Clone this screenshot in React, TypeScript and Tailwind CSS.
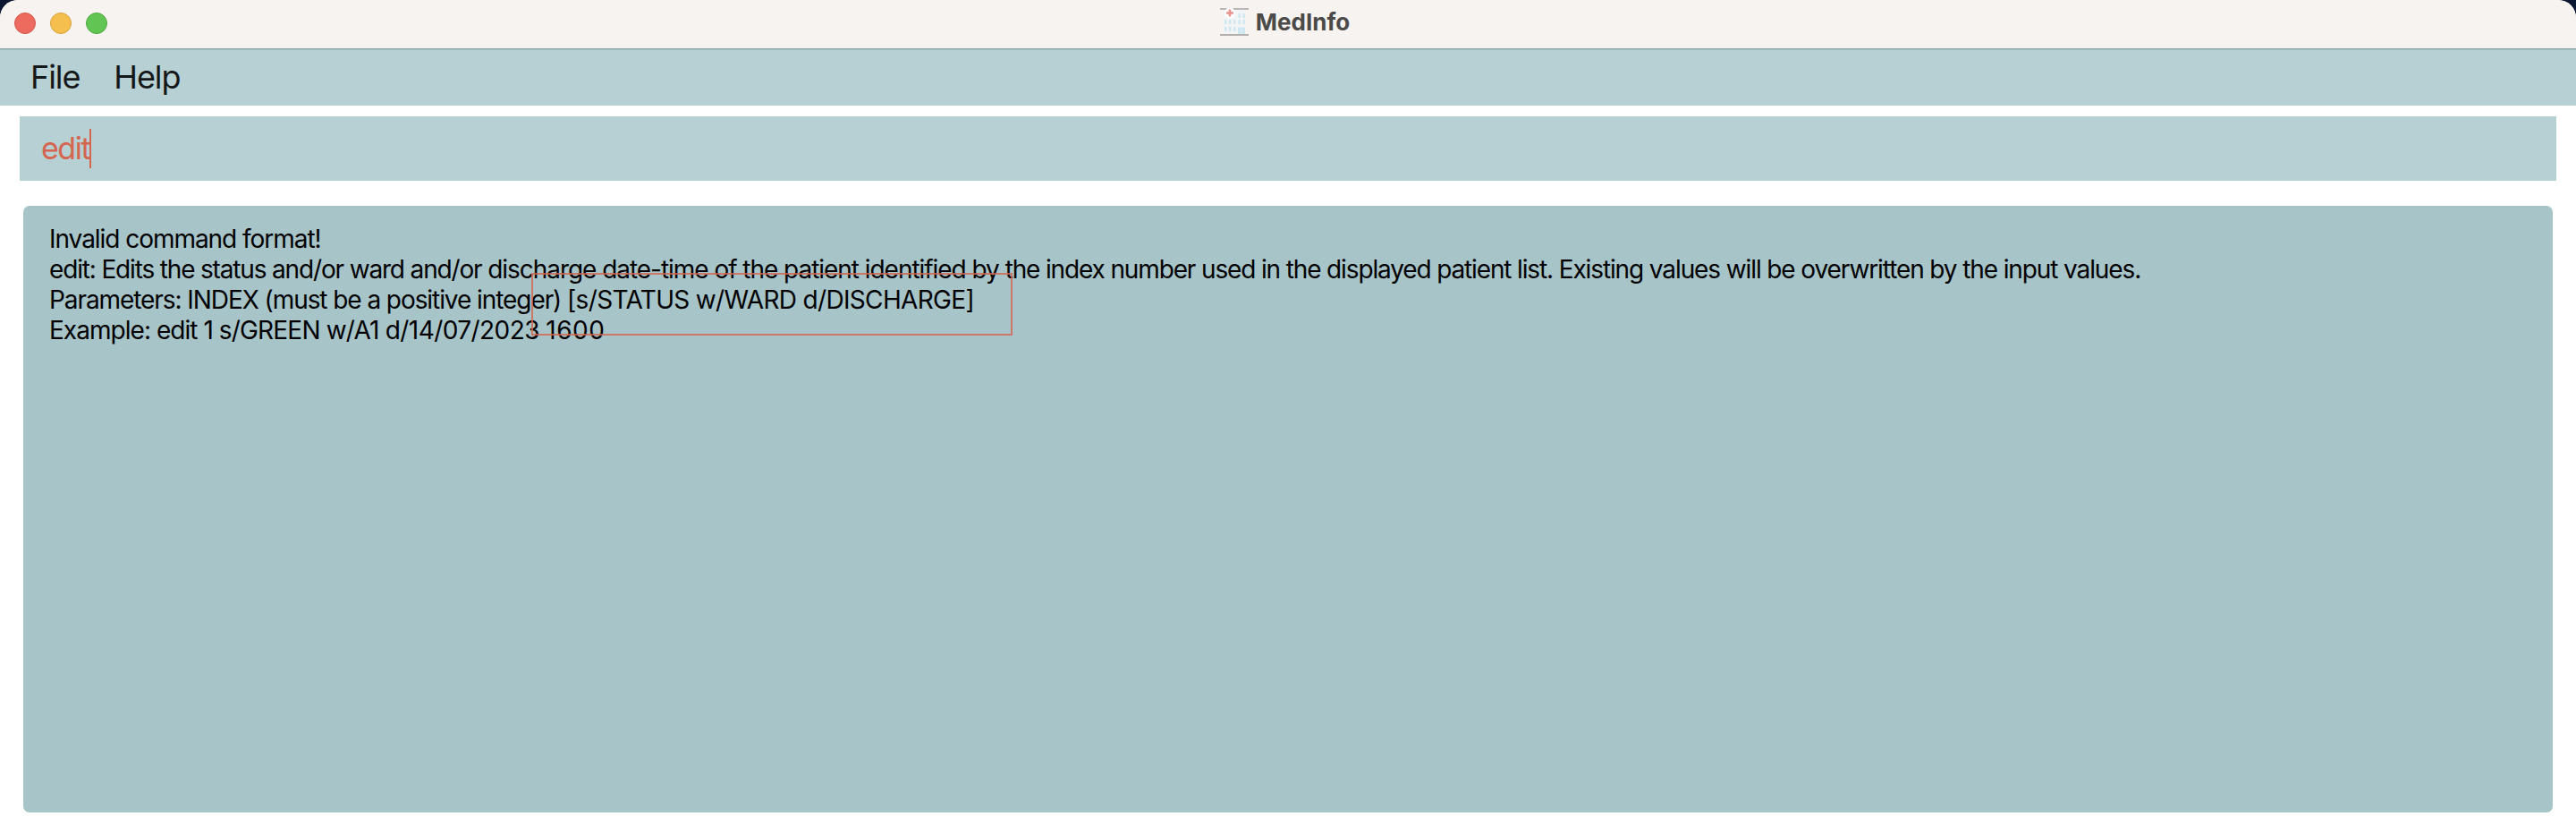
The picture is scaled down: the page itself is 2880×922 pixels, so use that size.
type Run = { text: string; spacing: string };

const messageLines: Run[][] = [
  [{ text: "Invalid command format!", spacing: "tracking-[-1.04px]" }],
  [
    { text: "edit: Edits the status and/or ward and/or ", spacing: "tracking-[-1.16px]" },
    { text: "discharge date-time of the patient identified by ", spacing: "tracking-[-1.04px]" },
    { text: "the index number used in the displayed patient list. ", spacing: "tracking-[-1.14px]" },
    { text: "Existing values will be overwritten by the input values.", spacing: "tracking-[-1.11px]" },
  ],
  [
    { text: "Parameters: INDEX (must be a positive integer) ", spacing: "tracking-[-1.07px]" },
    { text: "[s/STATUS w/WARD d/DISCHARGE]", spacing: "tracking-[-0.67px]" },
  ],
  [
    { text: "Example: edit 1 ", spacing: "tracking-[-0.96px]" },
    { text: "s/GREEN w/A1 ", spacing: "tracking-[-0.8px]" },
    { text: "d/14/07/2023 ", spacing: "tracking-[-0.56px]" },
    { text: "1600", spacing: "tracking-[0.5px]" },
  ],
];

function HospitalIcon() {
  return (
    <svg width="32" height="32" viewBox="0 0 32 32">
      <rect x="4" y="2" width="24" height="27" fill="#f3f4f6" />
      <rect x="0" y="0" width="32" height="2" fill="#b9b7b7" />
      <rect x="0" y="29" width="32" height="2" fill="#b3b0af" />
      <g fill="#cfe7f1">
        {[13, 21].map((y) =>
          [5, 10, 15].map((x) => <rect key={`${x}-${y}`} x={x} y={y} width="2.4" height="5" />),
        )}
        {[6, 13].map((y) =>
          [20.5, 25.5].map((x) => <rect key={`${x}-${y}`} x={x} y={y} width="2.4" height="5" />),
        )}
        <rect x="20" y="21.5" width="8" height="7.5" />
      </g>
      <path d="M24 23v6" stroke="#f3f4f6" strokeWidth="0.6" />
      <circle cx="11" cy="5.5" r="6" fill="#ffffff" />
      <path d="M11 1.5v8M7 5.5h8" stroke="#e9938f" strokeWidth="2.6" />
    </svg>
  );
}

export default function App() {
  return (
    <div className="h-[922px] w-[2880px] overflow-hidden bg-[#0b1630] font-['Inter',sans-serif]">
      <div className="flex h-full flex-col overflow-hidden rounded-t-[20px] bg-white">
        <header className="grid h-[54px] shrink-0 grid-cols-3 items-center bg-[#f7f3f0] px-4 pb-0.5">
          <div className="flex gap-4">
            <span className="size-6 rounded-full border border-[#d35549] bg-[#ec6a5e]" />
            <span className="size-6 rounded-full border border-[#d9a13d] bg-[#f4bf4f]" />
            <span className="size-6 rounded-full border border-[#4fa93c] bg-[#61c554]" />
          </div>
          <div className="flex items-center justify-center gap-2 pb-0.5 pr-[7px]">
            <HospitalIcon />
            <span className="text-[26px] font-bold leading-8 text-[#4b4a48]">MedInfo</span>
          </div>
        </header>
        <nav className="flex h-16 shrink-0 items-center gap-[38px] border-t border-[#86a4a7] bg-[#b7d0d4] pb-0.5 pl-[34px] text-[36px] leading-none tracking-[-1.1px] text-[#151819] shadow-[inset_0_1px_0_#a5bec1]">
          <span>File</span>
          <span>Help</span>
        </nav>
        <div className="mx-[22px] mt-3 flex h-[72px] shrink-0 items-center bg-[#b7d0d4] pl-6">
          <span className="text-[34px] leading-none tracking-[-1.5px] text-[#d5654f]">edit</span>
          <span className="h-11 w-0.5 bg-[#d5654f]" />
        </div>
        <main className="relative mx-[26px] mt-7 h-[678px] shrink-0 rounded-[7px] bg-[#a7c4c8] pl-[29px] pt-5">
          {messageLines.map((runs) => (
            <div key={runs[0].text} className="whitespace-pre text-[28px] leading-[34px] text-black">
              {runs.map((run) => (
                <span key={run.text} className={run.spacing}>
                  {run.text}
                </span>
              ))}
            </div>
          ))}
          <div className="absolute left-[568px] top-[75px] h-[70px] w-[538px] border-2 border-[#d5654f]/80" />
        </main>
      </div>
    </div>
  );
}
